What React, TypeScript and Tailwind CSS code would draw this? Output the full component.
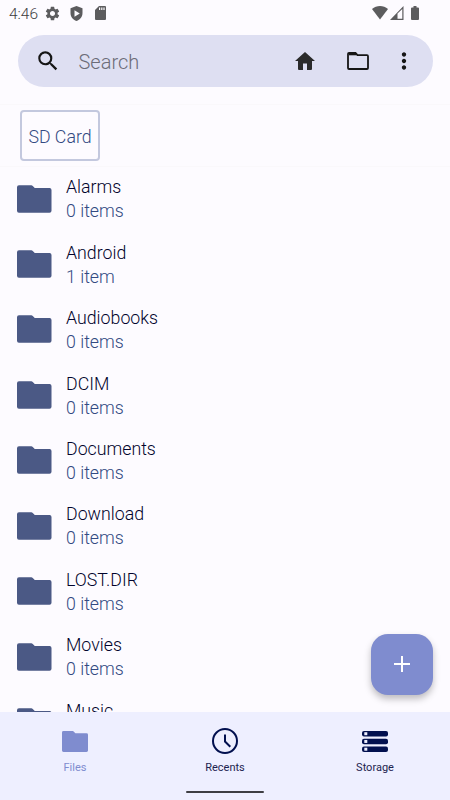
import type { ReactNode } from "react";
import { MdMoreVert, MdSearch, MdSettings } from "react-icons/md";

type FileItem = {
  name: string;
  count: number;
};

const files: FileItem[] = [
  { name: "Alarms", count: 0 },
  { name: "Android", count: 1 },
  { name: "Audiobooks", count: 0 },
  { name: "DCIM", count: 0 },
  { name: "Documents", count: 0 },
  { name: "Download", count: 0 },
  { name: "LOST.DIR", count: 0 },
  { name: "Movies", count: 0 },
  { name: "Music", count: 0 },
];

const FolderIcon = ({ className }: { className: string }) => (
  <svg viewBox="0 0 35 28" fill="currentColor" className={className}>
    <path d="M2 0H14.5Q15.3 0 16 .8L18 2.9H33Q35 2.9 35 4.9V26Q35 28 33 28H2Q0 28 0 26V2Q0 0 2 0Z" />
  </svg>
);

const StatusBar = () => (
  <div className="flex h-[35px] shrink-0 items-start justify-between pt-[5px] pr-[31px] pl-[9px] text-[#5c5c5e]">
    <div className="flex items-center">
      <span className="w-[30px] text-[15.500px] leading-[18px] font-light text-[#3c3c3e]">4:46</span>
      <MdSettings className="ml-[5px] size-[17px] -translate-y-px" />
      <svg viewBox="0 0 12 15" fill="currentColor" className="ml-[9px] h-[15px] w-[13px] -translate-y-px">
        <path
          fillRule="evenodd"
          d="M6 0 0 2.300V7C0 10.800 2.500 14 6 15 9.500 14 12 10.800 12 7V2.300ZM4 4.300 9.300 7.500 4 10.700Z"
        />
      </svg>
      <svg viewBox="0 0 11 14" fill="currentColor" className="ml-[12px] h-[14px] w-[11px] -translate-y-px">
        <path
          fillRule="evenodd"
          d="M4 0H10Q11 0 11 1V13Q11 14 10 14H1Q0 14 0 13V4ZM4 1.500V4H5.200V1.500ZM6.200 1.500V4H7.400V1.500ZM8.400 1.500V4H9.600V1.500Z"
        />
      </svg>
    </div>
    <div className="flex items-center pt-[1px]">
      <svg viewBox="0 0 16 14" fill="currentColor" className="h-[14px] w-4">
        <path d="M8 13.500 0 3C4.500-1 11.500-1 16 3Z" />
      </svg>
      <svg viewBox="0 0 14 14" fill="currentColor" className="ml-[2px] h-[14px] w-[14px]">
        <path fillRule="evenodd" d="M13.500 0V14H0ZM12.300 2.900 7.500 7.500V12.800H12.300Z" />
      </svg>
      <svg viewBox="0 0 8 14" fill="currentColor" className="ml-[7px] h-[14px] w-2">
        <path d="M2.500 0h3v1.400H7q1 0 1 1V13q0 1-1 1H1q-1 0-1-1V2.400q0-1 1-1h1.500Z" />
      </svg>
    </div>
  </div>
);

const SearchBar = () => (
  <div className="mx-[17.500px] flex h-[52px] shrink-0 items-center rounded-full bg-[#dedff2] pr-4 pl-[17px] text-[#161616]">
    <MdSearch className="size-[26px]" />
    <span className="ml-[18px] flex-1 pt-[2px] text-xl font-light text-[#6c6c78]">Search</span>
    <svg viewBox="0 0 20 18" fill="currentColor" className="h-[18px] w-5 text-[#2b2b2b]">
      <path d="M10 0 0 9H3V17Q3 18 4 18H8V11.500H12V18H16Q17 18 17 17V9H20Z" />
    </svg>
    <svg
      viewBox="0 0 22 18"
      fill="none"
      stroke="currentColor"
      strokeWidth="1.8"
      className="ml-8 h-[18px] w-[22px]"
    >
      <path d="M2 1H8.500L10.500 3.200H20Q21 3.200 21 4.200V16Q21 17 20 17H2Q1 17 1 16V2Q1 1 2 1Z" />
      <path d="M2 2.400H9.500" />
    </svg>
    <MdMoreVert className="ml-[22px] size-[26px]" />
  </div>
);

const FileRow = ({ name, count }: FileItem) => (
  <div className="flex h-[65.450px] shrink-0 items-start pl-[17px]">
    <FolderIcon className="mt-[17.500px] h-7 w-[34.500px] text-[#4b5985]" />
    <div className="mt-[8.200px] ml-[14.500px] text-[17.750px] leading-6 font-light">
      <p className="text-[#02042c]">{name}</p>
      <p className="text-[#334a82]">{count === 1 ? "1 item" : `${count} items`}</p>
    </div>
  </div>
);

const NavItem = ({
  label,
  active,
  children,
}: {
  label: string;
  active?: boolean;
  children: ReactNode;
}) => (
  <div
    className={`flex flex-1 flex-col items-center pt-[15px] ${active ? "text-[#7f8ccf]" : "text-[#02104f]"}`}
  >
    <div className="flex h-7 items-center">{children}</div>
    <span className={`mt-[6px] text-[11px] leading-[14px] ${active ? "" : "text-[#1d2350]"}`}>
      {label}
    </span>
  </div>
);

const App = () => {
  return (
    <div className="relative flex h-[800px] w-[450px] flex-col overflow-hidden bg-[#fdfbff] font-[Roboto,sans-serif] select-none">
      <StatusBar />
      <SearchBar />

      <div className="mt-[17px] flex h-[63px] shrink-0 items-center border-y border-[#faf8fb] pl-[20px]">
        <div className="flex h-[51px] w-20 items-center justify-center rounded-[4px] border-2 border-[#c3c8de] pt-[3px] text-[17.750px] font-light text-[#334a82]">
          SD Card
        </div>
      </div>

      <div className="flex min-h-0 flex-1 flex-col overflow-hidden">
        {files.map((file) => (
          <FileRow key={file.name} {...file} />
        ))}
      </div>

      <button className="absolute top-[633.500px] left-[371px] flex size-[61.500px] items-center justify-center rounded-[17px] bg-[#7f8ccf] shadow-[0_4px_7px_rgba(0,0,0,0.25)]">
        <svg viewBox="0 0 16 16" stroke="white" strokeWidth="2" className="size-4">
          <path d="M8 0V16M0 8H16" />
        </svg>
      </button>

      <div className="flex h-[87.600px] shrink-0 flex-col items-center bg-[#eeefff]">
        <div className="flex w-full flex-1">
          <NavItem label="Files" active>
            <FolderIcon className="h-[21px] w-[26px]" />
          </NavItem>
          <NavItem label="Recents">
            <svg
              viewBox="0 0 26 26"
              fill="none"
              stroke="currentColor"
              strokeWidth="2"
              className="size-[26px]"
            >
              <circle cx="13" cy="13" r="12" />
              <path d="M13 6.500V13.500L18.300 18.800" />
            </svg>
          </NavItem>
          <NavItem label="Storage">
            <svg viewBox="0 0 26 21" fill="currentColor" className="h-[21px] w-[26px]">
              {[0, 7.75, 15.5].map((y) => (
                <g key={y}>
                  <rect y={y} width="26" height="5.5" rx="2" />
                  <rect x="2.300" y={y + 1.2} width="3" height="3" fill="#eeefff" />
                </g>
              ))}
            </svg>
          </NavItem>
        </div>
        <div className="mb-[7px] h-[2.500px] w-[78px] rounded-full bg-[#3e3e44]" />
      </div>
    </div>
  );
};

export default App;
